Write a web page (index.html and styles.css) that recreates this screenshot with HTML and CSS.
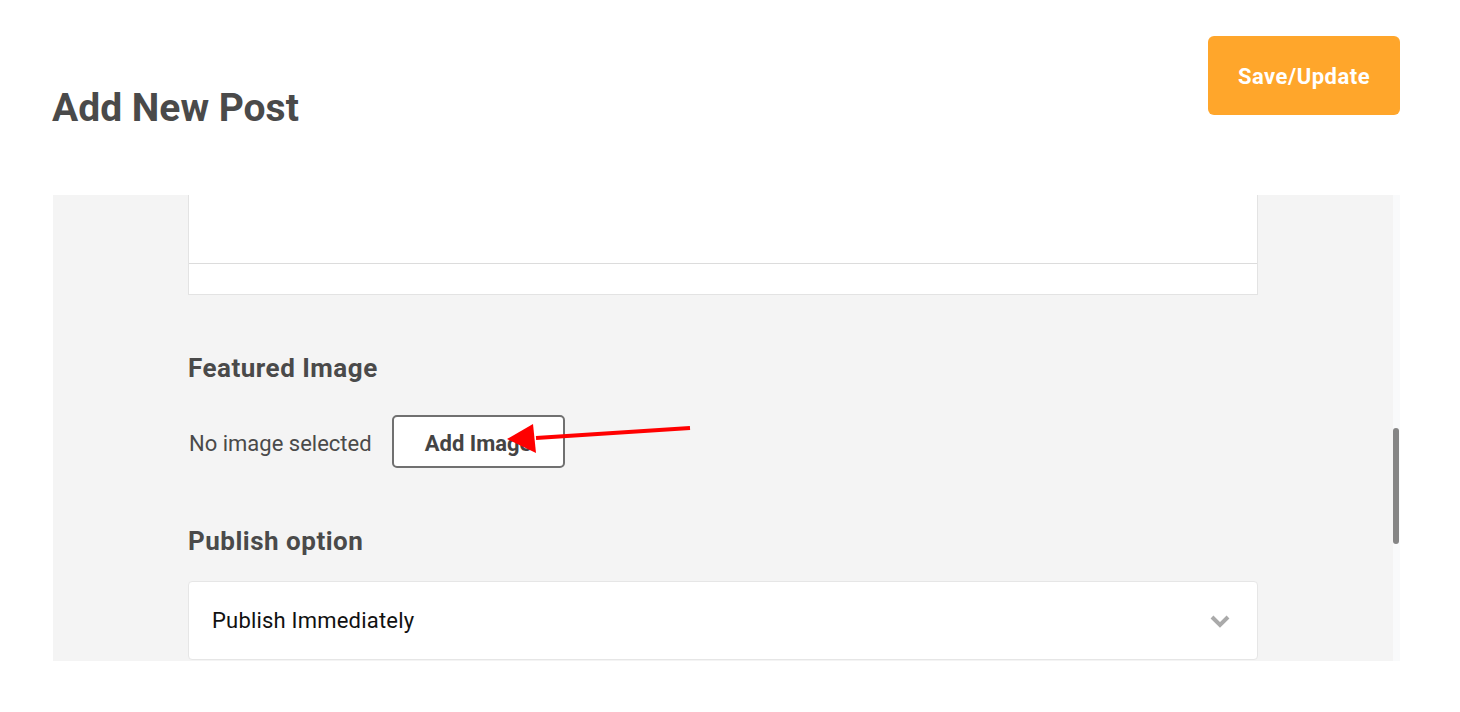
FILE: index.html
```html
<!DOCTYPE html>
<html>
<head>
<meta charset="utf-8">
<link rel="stylesheet" href="styles.css">
</head>
<body>
<div class="page">
  <header class="header">
    <h1 class="title">Add New Post</h1>
    <button class="save-btn">Save/Update</button>
  </header>
  <section class="panel">
    <div class="panel-scroll">
      <div class="content">
        <div class="editor">
          <div class="editor-body"></div>
          <div class="editor-foot"></div>
        </div>
        <h2 class="section-title featured">Featured Image</h2>
        <div class="image-row">
          <span class="no-image">No image selected</span>
          <button class="add-image">Add Image</button>
          <svg class="arrow" width="200" height="40" viewBox="0 0 200 40">
            <line x1="184" y1="4" x2="30" y2="14" stroke="#ff0000" stroke-width="4"/>
            <polygon points="1,15 27,0 30,29" fill="#ff0000"/>
          </svg>
        </div>
        <h2 class="section-title publish">Publish option</h2>
        <div class="select">
          <span class="select-value">Publish Immediately</span>
          <svg class="chevron" width="20" height="14" viewBox="0 0 20 14">
            <polyline points="2,3 10,11 18,3" fill="none" stroke="#aaaaaa" stroke-width="4"/>
          </svg>
        </div>
      </div>
    </div>
    <div class="scrollbar"><div class="thumb"></div></div>
  </section>
</div>
</body>
</html>
```
FILE: styles.css
```css
html, body {
  margin: 0;
  padding: 0;
  background: #ffffff;
}
body {
  font-family: Roboto, "Noto Sans", "Liberation Sans", sans-serif;
  color: #4a4a4a;
  width: 1460px;
  height: 712px;
  overflow: hidden;
}
.page {
  padding: 36px 60px 0 53px;
}
.header {
  display: flex;
  justify-content: space-between;
  align-items: flex-start;
  height: 159px;
}
.title {
  margin: 50px 0 0 -1px;
  font-size: 39px;
  font-weight: 700;
  line-height: 44px;
  letter-spacing: 0;
  color: #4a4a4a;
}
.save-btn {
  width: 192px;
  height: 79px;
  border: none;
  border-radius: 6px;
  background: #ffa62b;
  color: #ffffff;
  font-family: inherit;
  font-size: 22px;
  font-weight: 700;
  letter-spacing: 0.5px;
  padding: 2px 0 0;
  margin: 0;
}
.panel {
  display: flex;
  height: 466px;
  background: #f4f4f4;
}
.panel-scroll {
  flex: 1;
  overflow: hidden;
}
.content {
  margin: 0 135px 0 135px;
}
.editor {
  background: #ffffff;
  border: 1px solid #e3e3e3;
  border-top: none;
}
.editor-body {
  height: 68px;
  border-bottom: 1px solid #dcdcdc;
}
.editor-foot {
  height: 30px;
}
.section-title {
  margin: 0;
  font-size: 26px;
  font-weight: 700;
  line-height: 30px;
  letter-spacing: 0.5px;
  color: #4a4a4a;
}
.featured {
  margin-top: 58px;
}
.image-row {
  display: flex;
  align-items: center;
  margin-top: 32px;
  position: relative;
}
.no-image {
  font-size: 22px;
  color: #4a4a4a;
  margin-left: 1px;
  padding-top: 3px;
}
.add-image {
  margin-left: 20px;
  width: 173px;
  height: 53px;
  border: 2px solid #707070;
  border-radius: 5px;
  background: #ffffff;
  color: #444444;
  font-family: inherit;
  font-size: 22px;
  font-weight: 700;
  padding: 3px 0 0;
}
.arrow {
  position: absolute;
  left: 318px;
  top: 9px;
}
.section-title.publish {
  margin-top: 58px;
}
.select {
  margin-top: 25px;
  height: 77px;
  background: #ffffff;
  border: 1px solid #e6e6e6;
  border-radius: 4px;
  display: flex;
  align-items: center;
  justify-content: space-between;
  padding: 0 27px 0 23px;
}
.select-value {
  font-size: 22px;
  letter-spacing: 0.2px;
  color: #111111;
}
.chevron {
  display: block;
}
.scrollbar {
  width: 7px;
  background: #f9fafb;
}
.thumb {
  margin-top: 233px;
  width: 6px;
  height: 116px;
  border-radius: 3px;
  background: #858585;
}
```
